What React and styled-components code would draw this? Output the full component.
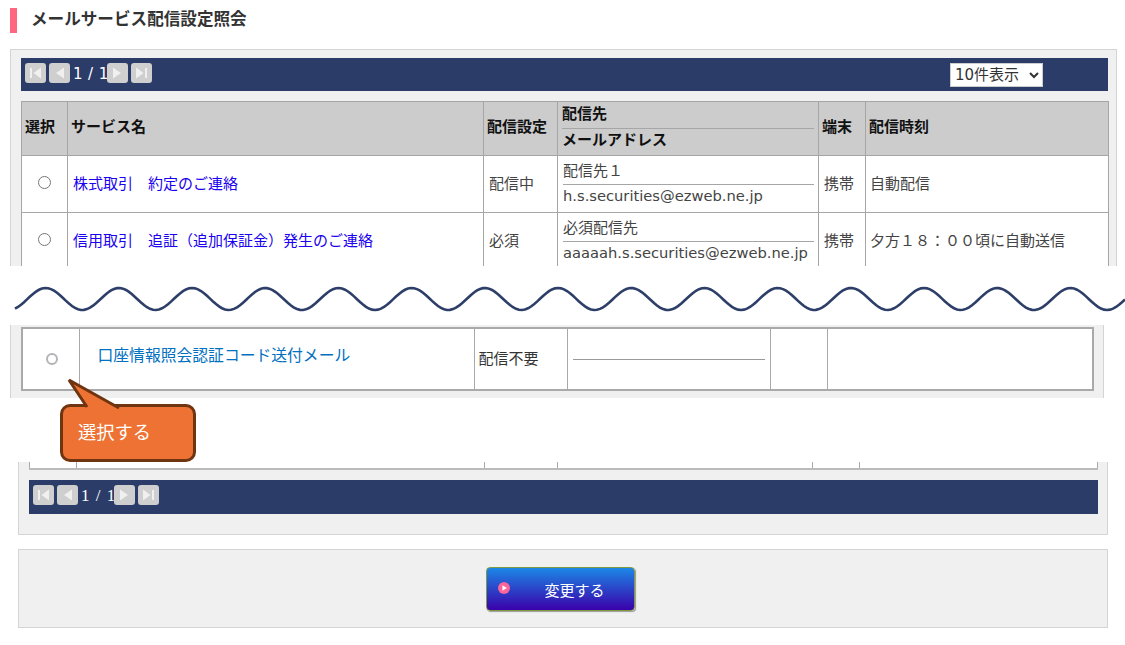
import React from 'react'
import styled, { createGlobalStyle } from 'styled-components'

const sans = `"Noto Sans CJK JP", "Noto Sans", sans-serif`
const latin = `"DejaVu Sans", "Noto Sans CJK JP", sans-serif`

const wavePath = () => {
  const points = []
  for (let x = 15; x <= 1125; x += 3) {
    const y = 33 - 11 * Math.cos(((x - 45.7) / 73.2) * Math.PI * 2)
    points.push(`${x},${y.toFixed(2)}`)
  }
  return `M${points.join(' L')}`
}

export default function App() {
  return (
    <Page>
      <GlobalStyle />
      <Title>メールサービス配信設定照会</Title>

      <TopPanel>
        <NavBar $height={33}>
          <Pager />
          <PageSize>
            <option>10件表示</option>
          </PageSize>
        </NavBar>
        <ServiceTable>
          <colgroup>
            <Col $w={46} />
            <Col $w={416} />
            <Col $w={74} />
            <Col $w={261} />
            <Col $w={47} />
            <Col $w={243} />
          </colgroup>
          <thead>
            <tr>
              <HeadCell>選択</HeadCell>
              <HeadCell>サービス名</HeadCell>
              <HeadCell>配信設定</HeadCell>
              <StackedHeadCell>
                <HeadLine $height={27} $rule>配信先</HeadLine>
                <HeadLine $height={21}>メールアドレス</HeadLine>
              </StackedHeadCell>
              <HeadCell>端末</HeadCell>
              <HeadCell>配信時刻</HeadCell>
            </tr>
          </thead>
          <tbody>
            <ServiceRow
              name="株式取引　約定のご連絡"
              setting="配信中"
              target="配信先１"
              mail="h.s.securities@ezweb.ne.jp"
              time="自動配信"
            />
            <ServiceRow
              name="信用取引　追証（追加保証金）発生のご連絡"
              setting="必須"
              target="必須配信先"
              mail="aaaaah.s.securities@ezweb.ne.jp"
              time="夕方１８：００頃に自動送信"
            />
          </tbody>
        </ServiceTable>
      </TopPanel>

      <WaveBand>
        <WaveSvg viewBox="0 0 1125 59">
          <path d={wavePath()} fill="none" stroke="#2d3f68" strokeWidth="2.6" />
        </WaveSvg>
      </WaveBand>

      <DetailPanel>
        <DetailTable>
          <colgroup>
            <Col $w={57} />
            <Col $w={395} />
            <Col $w={93} />
            <Col $w={203} />
            <Col $w={57} />
            <Col $w={266} />
          </colgroup>
          <tbody>
            <tr>
              <DetailCell>
                <DetailRadio />
              </DetailCell>
              <DetailCell>
                <DetailLink>口座情報照会認証コード送付メール</DetailLink>
              </DetailCell>
              <DetailCell>
                <DetailText>配信不要</DetailText>
              </DetailCell>
              <DetailCell>
                <DetailRule />
              </DetailCell>
              <DetailCell />
              <DetailCell />
            </tr>
          </tbody>
        </DetailTable>
      </DetailPanel>

      <CalloutGap>
        <Callout>
          <CalloutTail viewBox="0 0 70 34">
            <path d="M6 2 L24 30 L58 30 Z" fill="#ed7233" />
            <path
              d="M24 29 L6 2 L56 30"
              fill="none"
              stroke="#6f3410"
              strokeWidth="3"
            />
          </CalloutTail>
          選択する
        </Callout>
      </CalloutGap>

      <BottomPanel>
        <RemnantTable>
          <colgroup>
            <Col $w={47} />
            <Col $w={408} />
            <Col $w={73} />
            <Col $w={255} />
            <Col $w={47} />
            <Col $w={238} />
          </colgroup>
          <tbody>
            <tr>
              <RemnantCell />
              <RemnantCell />
              <RemnantCell />
              <RemnantCell />
              <RemnantCell />
              <RemnantCell />
            </tr>
          </tbody>
        </RemnantTable>
        <NavBar $height={34}>
          <Pager $serif />
        </NavBar>
      </BottomPanel>

      <ActionPanel>
        <ChangeButton>
          <ButtonIcon viewBox="0 0 13 13">
            <circle cx="6.5" cy="6.5" r="6.5" fill="#f7659a" />
            <path d="M4.8 3.4 L9.6 6.5 L4.8 9.6 Z" fill="#fff" />
          </ButtonIcon>
          変更する
        </ChangeButton>
      </ActionPanel>
    </Page>
  )
}

function Pager({ $serif }) {
  return (
    <PagerGroup>
      <PagerButton>
        <PagerIcon viewBox="0 0 21 20">
          <path d="M5 5h2v10H5z M16 4.5v11L8.5 10z" fill="#f0f0f0" />
        </PagerIcon>
      </PagerButton>
      <PagerButton>
        <PagerIcon viewBox="0 0 21 20">
          <path d="M15 4.5v11L7 10z" fill="#f0f0f0" />
        </PagerIcon>
      </PagerButton>
      <PagerCount $serif={$serif}>1 / 1</PagerCount>
      <PagerButton>
        <PagerIcon viewBox="0 0 21 20">
          <path d="M6 4.5v11l8-5.5z" fill="#f0f0f0" />
        </PagerIcon>
      </PagerButton>
      <PagerButton>
        <PagerIcon viewBox="0 0 21 20">
          <path d="M5 4.5v11l7.5-5.5z M14 5h2v10h-2z" fill="#f0f0f0" />
        </PagerIcon>
      </PagerButton>
    </PagerGroup>
  )
}

function ServiceRow({ name, setting, target, mail, time }) {
  return (
    <tr>
      <RadioCell>
        <RowRadio />
      </RadioCell>
      <InsetCell>
        <ServiceLink>{name}</ServiceLink>
      </InsetCell>
      <InsetCell>{setting}</InsetCell>
      <TargetCell>
        <TargetLine>{target}</TargetLine>
        <MailLine>{mail}</MailLine>
      </TargetCell>
      <InsetCell>携帯</InsetCell>
      <BodyCell>{time}</BodyCell>
    </tr>
  )
}

const GlobalStyle = createGlobalStyle`
  html, body {
    margin: 0;
    padding: 0;
    background: #fff;
  }

  body {
    font-family: ${sans};
    color: #333;
  }
`

const Page = styled.div`
  display: flex;
  flex-direction: column;
  width: 1125px;
  height: 645px;
  overflow: hidden;
`

const Title = styled.h1`
  display: flex;
  align-items: center;
  box-sizing: border-box;
  height: 25px;
  margin: 8px 0 16px 10px;
  padding: 0 0 4px 14px;
  border-left: 7px solid #ff6680;
  font-size: 16.6px;
  font-weight: 700;
  line-height: 21px;
  color: #333;
`

const TopPanel = styled.section`
  box-sizing: border-box;
  flex: 0 0 auto;
  width: 1107px;
  height: 217px;
  margin-left: 10px;
  padding: 8px 8px 0 10px;
  overflow: hidden;
  background: #f0f0f0;
  border: 1px solid #d4d4d4;
  border-bottom: 0;
`

const NavBar = styled.div`
  display: flex;
  align-items: flex-start;
  justify-content: space-between;
  height: ${(p) => p.$height}px;
  box-sizing: border-box;
  padding: 5px 65px 0 4px;
  background: #2c3c68;
`

const PagerGroup = styled.div`
  display: flex;
  align-items: center;
  gap: 3px;
  height: 20px;
`

const PagerButton = styled.span`
  display: block;
  flex: 0 0 21px;
  width: 21px;
  height: 20px;
  border-radius: 3px;
  background: #cfcfcf;
`

const PagerIcon = styled.svg`
  display: block;
  width: 21px;
  height: 20px;
`

const PagerCount = styled.span`
  width: ${(p) => (p.$serif ? 33 : 34)}px;
  margin-right: -3px;
  padding-top: 2px;
  font-family: ${(p) => (p.$serif ? `"Liberation Serif", serif` : latin)};
  font-size: ${(p) => (p.$serif ? 17 : 15)}px;
  letter-spacing: ${(p) => (p.$serif ? 1 : 0.4)}px;
  line-height: 20px;
  white-space: nowrap;
  color: #fff;
`

const PageSize = styled.select`
  width: 93px;
  height: 24px;
  padding: 0;
  font-family: ${latin};
  font-size: 15px;
  color: #333;
  background: #fff;
  border: 1px solid #ccc;
  border-radius: 0;
`

const ServiceTable = styled.table`
  width: 1087px;
  margin-top: 10px;
  table-layout: fixed;
  border-collapse: collapse;
  background: #fff;
`

const Col = styled.col`
  width: ${(p) => p.$w}px;
`

const HeadCell = styled.th`
  box-sizing: border-box;
  height: 54px;
  padding: 0 3px 5px;
  text-align: left;
  font-size: 15px;
  font-weight: 700;
  line-height: 18px;
  white-space: nowrap;
  color: #111;
  background: #ccc;
  border: 1px solid #a6a6a6;
`

const StackedHeadCell = styled(HeadCell)`
  padding: 0 4px;
  vertical-align: top;
`

const HeadLine = styled.div`
  display: flex;
  align-items: center;
  box-sizing: border-box;
  height: ${(p) => p.$height}px;
  padding-bottom: ${(p) => (p.$rule ? 4 : 2)}px;
  border-bottom: ${(p) => (p.$rule ? '1px solid #a6a6a6' : '0')};
`

const BodyCell = styled.td`
  box-sizing: border-box;
  height: 57px;
  padding: 0 4px 2px;
  font-size: 15px;
  line-height: 18px;
  white-space: nowrap;
  color: #444;
  background: #fff;
  border: 1px solid #a6a6a6;
`

const InsetCell = styled(BodyCell)`
  padding-left: 5px;
`

const RadioCell = styled(BodyCell)`
  text-align: center;
  padding: 0;
`

const RowRadio = styled.input.attrs({ type: 'radio', name: 'service' })`
  display: block;
  width: 13px;
  height: 13px;
  margin: -4px auto 0;
`

const ServiceLink = styled.a`
  color: #1a00f0;
  text-decoration: none;
`

const TargetCell = styled(BodyCell)`
  padding: 1px 4px 0 5px;
  vertical-align: top;
`

const TargetLine = styled.div`
  display: flex;
  align-items: center;
  box-sizing: border-box;
  height: 28px;
  padding-bottom: 2px;
  border-bottom: 1px solid #a6a6a6;
`

const MailLine = styled.div`
  display: flex;
  align-items: center;
  height: 21px;
  font-family: ${latin};
  font-size: 14.7px;
`

const WaveBand = styled.div`
  flex: 0 0 59px;
  background: #fff;
`

const WaveSvg = styled.svg`
  display: block;
  width: 1125px;
  height: 59px;
`

const DetailPanel = styled.section`
  box-sizing: border-box;
  flex: 0 0 auto;
  width: 1094px;
  height: 73px;
  margin-left: 10px;
  padding: 2px 0 0 10px;
  background: #f0f0f0;
  border-left: 1px solid #d4d4d4;
  border-right: 1px solid #d4d4d4;
`

const DetailTable = styled.table`
  width: 1071px;
  height: 64px;
  table-layout: fixed;
  border-collapse: collapse;
  background: #fff;
  border: 2px solid #a9a9a9;
`

const DetailCell = styled.td`
  padding: 0;
  border: 1px solid #a9a9a9;
  border-top-width: 2px;
  border-bottom-width: 2px;
`

const DetailRadio = styled.span`
  display: block;
  box-sizing: border-box;
  width: 12px;
  height: 12px;
  margin: 0 0 0 23px;
  background: #fff;
  border: 2px solid #b4b4b8;
  border-radius: 50%;
`

const DetailLink = styled.a`
  display: block;
  margin: -8px 0 0 18px;
  font-size: 15.8px;
  line-height: 24px;
  color: #0070c0;
`

const DetailText = styled.span`
  display: block;
  padding: 0 0 3px 4px;
  font-size: 15px;
  color: #333;
`

const DetailRule = styled.div`
  height: 1px;
  margin: 0 5px;
  background: #999;
`

const CalloutGap = styled.div`
  position: relative;
  flex: 0 0 64px;
  z-index: 1;
`

const Callout = styled.div`
  position: absolute;
  left: 60px;
  top: 6px;
  box-sizing: border-box;
  display: flex;
  align-items: center;
  width: 136px;
  height: 58px;
  padding: 0 0 5px 15px;
  font-size: 18.3px;
  color: #fff;
  background: #ed7233;
  border: 3px solid #6f3410;
  border-radius: 10px;
`

const CalloutTail = styled.svg`
  position: absolute;
  left: 0;
  top: -29px;
  width: 70px;
  height: 34px;
`

const BottomPanel = styled.section`
  box-sizing: border-box;
  flex: 0 0 auto;
  width: 1090px;
  height: 73px;
  margin-left: 18px;
  padding: 0 9px 0 10px;
  background: #f0f0f0;
  border: 1px solid #d4d4d4;
  border-top: 0;
`

const RemnantTable = styled.table`
  width: 1068px;
  height: 7px;
  margin-bottom: 10px;
  table-layout: fixed;
  border-collapse: collapse;
  background: #fff;
  border-bottom: 2px solid #bbb;
`

const RemnantCell = styled.td`
  height: 6px;
  padding: 0;
  border-left: 1px solid #aaa;
  border-right: 1px solid #aaa;
`

const ActionPanel = styled.section`
  box-sizing: border-box;
  display: flex;
  justify-content: center;
  align-items: flex-start;
  flex: 0 0 auto;
  width: 1090px;
  height: 79px;
  margin: 14px 0 0 18px;
  padding: 17px 5px 0 0;
  background: #f0f0f0;
  border: 1px solid #d4d4d4;
`

const ChangeButton = styled.div`
  position: relative;
  box-sizing: border-box;
  display: flex;
  align-items: center;
  justify-content: center;
  width: 149px;
  height: 44px;
  padding-left: 28px;
  font-size: 15px;
  color: #fff;
  background: linear-gradient(#1c87e6, #3a00aa);
  border: 1px solid #7f9a45;
  border-radius: 4px;
  box-shadow: 1px 1px 1px #999;
`

const ButtonIcon = styled.svg`
  position: absolute;
  left: 11px;
  top: 14px;
  width: 12px;
  height: 12px;
`
